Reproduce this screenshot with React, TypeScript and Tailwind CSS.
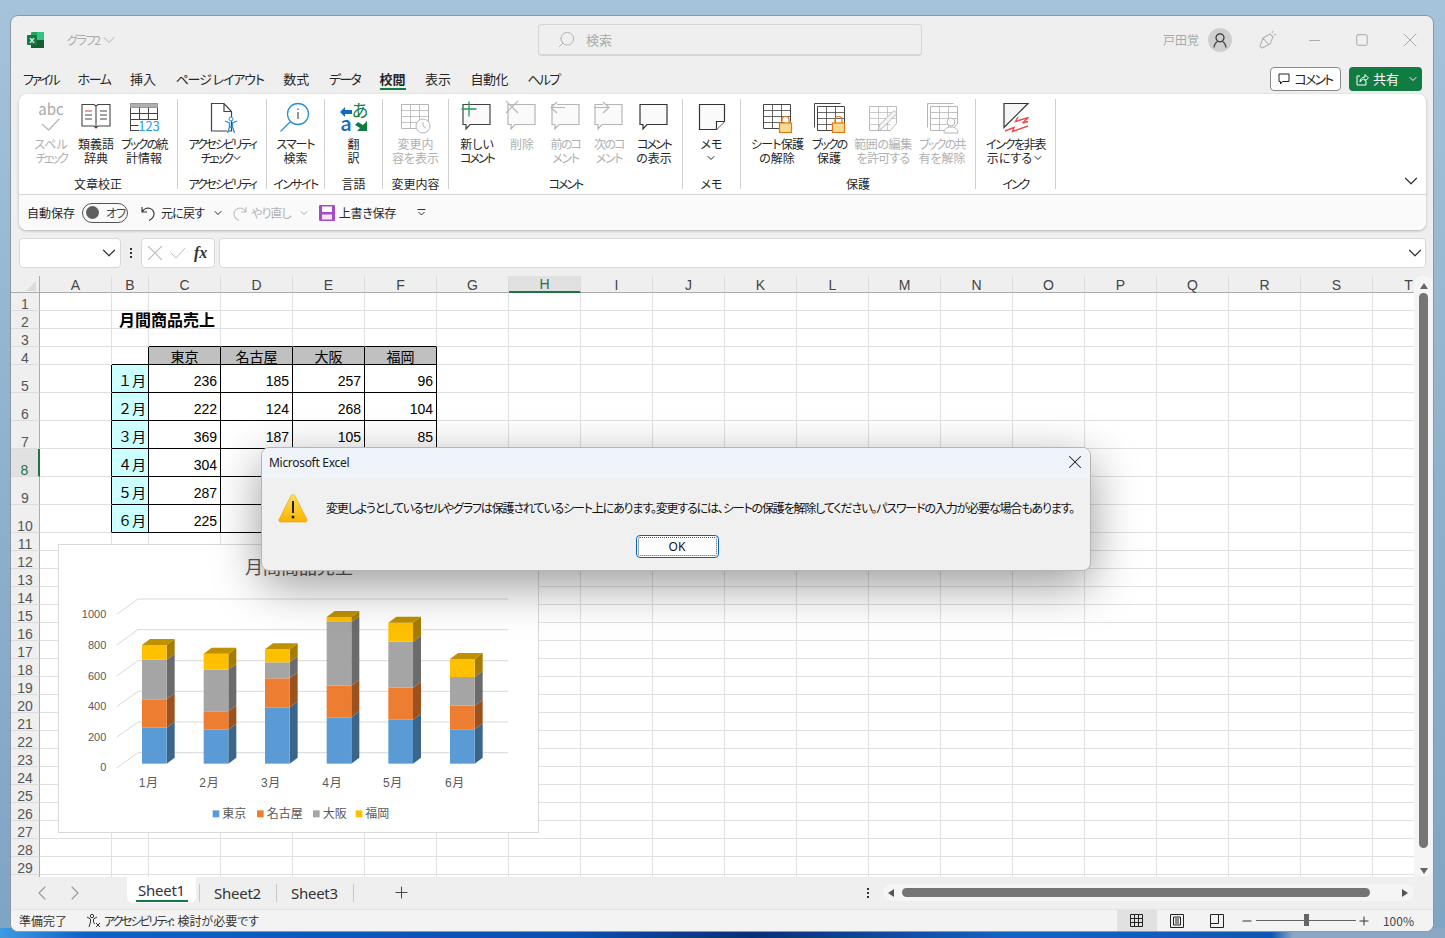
import type { ReactNode } from "react";
import { ChevronDown, ChevronLeft, ChevronRight, Minus, Plus, Search, Square, X } from "lucide-react";

const COLUMNS = "ABCDEFGHIJKLMNOPQRST".split("");
const ROWS = Array.from({ length: 30 }, (_, i) => i + 1);

const CELLS: Record<string, string> = {
  B2: "月間商品売上",
  C4: "東京", D4: "名古屋", E4: "大阪", F4: "福岡",
  B5: "１月", C5: "236", D5: "185", E5: "257", F5: "96",
  B6: "２月", C6: "222", D6: "124", E6: "268", F6: "104",
  B7: "３月", C7: "369", D7: "187", E7: "105", F7: "85",
  B8: "４月", C8: "304",
  B9: "５月", C9: "287",
  B10: "６月", C10: "225",
};

// ui font here is wider than the original on kana, so some labels get tightened
function T({ c, children }: { c: string; children: ReactNode }) {
  return <span className={c}>{children}</span>;
}

function Icon({ children, stroke = "#444" }: { children: ReactNode; stroke?: string }) {
  return (
    <svg width="36" height="34" viewBox="0 0 36 34" fill="none" stroke={stroke} strokeWidth="1" className="overflow-visible">
      {children}
    </svg>
  );
}

// comment bubble used by the comment buttons
function Bubble({ stroke, x = 4, y = 4.5 }: { stroke: string; x?: number; y?: number }) {
  return (
    <path d={`M${x} ${y}h27v20h-20l-4 4.5v-4.5h-3z`} fill="#fafafa" stroke={stroke} strokeWidth="1.2" />
  );
}

// small sheet with a folded corner, used by the protect buttons
function SheetGrid({ stroke, x = 4, y = 4 }: { stroke: string; x?: number; y?: number }) {
  return (
    <g transform={`translate(${x} ${y})`} stroke={stroke}>
      <path d="M.5.5h27v17l-6 7H.5z" fill="#fff" />
      <path d="M.5 6.5h27M.5 12.5h27M.5 18.5h21M9.5.5v24M18.5.5v24" strokeWidth="0.8" />
    </g>
  );
}

function Lock({ x, y }: { x: number; y: number }) {
  return (
    <g transform={`translate(${x} ${y})`}>
      <path d="M3 8V5a3.5 3.5 0 0 1 7 0v3" stroke="#e07a10" strokeWidth="1.2" fill="none" />
      <rect x="0.5" y="8" width="12" height="9.5" fill="#f8d98f" stroke="#e07a10" strokeWidth="1.2" />
    </g>
  );
}

function RibbonButton({
  icon,
  lines,
  disabled,
  className = "",
}: {
  icon: ReactNode;
  lines: ReactNode[];
  disabled?: boolean;
  className?: string;
}) {
  return (
    <div className={`flex flex-col items-center shrink-0 ${className}`}>
      <div className="h-[36px] flex justify-center">{icon}</div>
      <div className={`text-xs leading-[15px] text-center whitespace-nowrap ${disabled ? "text-[#b0b0b0]" : "text-[#262626]"}`}>
        {lines.map((l, i) => (
          <div key={i} className="flex items-center justify-center h-[14.5px]">{l}</div>
        ))}
      </div>
    </div>
  );
}

function RibbonGroup({ label, className = "", children }: { label: ReactNode; className?: string; children: ReactNode }) {
  return (
    <div className={`h-[90px] mt-[5px] flex flex-col border-r border-[#d0d0d0] shrink-0 ${className}`}>
      <div className="flex justify-center pt-px">{children}</div>
      <div className="mt-auto -mb-[2px] text-xs leading-[15px] text-center text-[#262626] whitespace-nowrap">{label}</div>
    </div>
  );
}

const Caret = () => <ChevronDown className="w-[12px] h-[12px]" strokeWidth={2} />;

function Chart() {
  const bars = [
    { x: 274, tops: [562, 477, 358, 314] },
    { x: 459, tops: [568, 513, 388, 340] },
    { x: 643, tops: [501, 414, 366, 327] },
    { x: 828, tops: [531, 436, 245, 230] },
    { x: 1013, tops: [538, 442, 304, 247] },
    { x: 1198, tops: [567, 496, 410, 356] },
  ];
  const front = ["#5b9bd5", "#ed7d31", "#a5a5a5", "#ffc000"];
  const side = ["#3a668c", "#9c521e", "#6b6b6b", "#a67c00"];
  const grid = [176, 268, 361, 453, 545, 637];
  const yLabels: [string, number][] = [["1000", 234], ["800", 325], ["600", 418], ["400", 509], ["200", 602], ["0", 692]];
  const xLabels: [string, number][] = [["1月", 294], ["2月", 476], ["3月", 661], ["4月", 845], ["5月", 1027], ["6月", 1213]];
  const legend: [string, number, string][] = [["東京", 486, front[0]], ["名古屋", 619, front[1]], ["大阪", 787, front[2]], ["福岡", 915, front[3]]];

  return (
    <svg width="481" height="289" viewBox="25 14 1443 867" className="block" fontFamily="'Liberation Sans', 'Noto Sans CJK JP', sans-serif">
      <rect x="25" y="14" width="1443" height="867" fill="#fff" />
      <text x="745" y="102" fontSize="54" fill="#595959" textAnchor="middle">月間商品売上</text>
      {grid.map(y => (
        <g key={y} stroke="#d9d9d9" strokeWidth="3">
          <path d={`M262 ${y}H1372`} />
          <path d={`M262 ${y}L198 ${y + 46}`} />
        </g>
      ))}
      {yLabels.map(([t, y]) => (
        <text key={t} x="167" y={y} fontSize="33" fill="#595959" textAnchor="end">{t}</text>
      ))}
      {bars.map(b => (
        <g key={b.x}>
          {b.tops.map((top, i) => {
            const bottom = i === 0 ? 670 : b.tops[i - 1];
            return (
              <g key={i}>
                <path d={`M${b.x + 74} ${bottom}l24 -18V${top - 18}l-24 18z`} fill={side[i]} />
                <rect x={b.x} y={top} width="74" height={bottom - top} fill={front[i]} />
              </g>
            );
          })}
          <path d={`M${b.x} ${b.tops[3]}h74l24 -18h-74z`} fill="#bf9000" />
        </g>
      ))}
      {xLabels.map(([t, x]) => (
        <text key={t} x={x} y="741" fontSize="36" fill="#595959" textAnchor="middle" letterSpacing="2">{t}</text>
      ))}
      {legend.map(([t, x, color]) => (
        <g key={t}>
          <rect x={x} y="810" width="20" height="21" fill={color} />
          <text x={x + 29} y="832" fontSize="36" fill="#595959">{t}</text>
        </g>
      ))}
    </svg>
  );
}

function Cell({ r, c }: { r: number; c: string }) {
  const text = CELLS[`${c}${r}`];
  const inBody = "CDEF".includes(c);
  const blackRight = (inBody && r >= 4 && r <= 10) || (c === "B" && r >= 4 && r <= 10) || (c === "A" && r >= 5 && r <= 10);
  const blackBottom = (inBody && r >= 3 && r <= 10) || (c === "B" && r >= 4 && r <= 10);
  const header = inBody && r === 4;
  const month = c === "B" && r >= 5 && r <= 10;
  const tall = r >= 5 && r <= 10;
  const title = r === 2 && c === "B";
  return (
    <div
      className={`flex whitespace-nowrap leading-[18px] text-black border-r border-b ${title ? "font-bold text-base pl-[7px] pt-[3px]" : "text-sm"} ${tall ? "h-7 items-end pb-[2px]" : "h-[18px] items-center"} ${blackRight ? "border-r-black" : "border-r-[#e0e0e0]"} ${blackBottom ? "border-b-black" : "border-b-[#e0e0e0]"} ${header ? "bg-[#c0c0c0] justify-center pt-[2px]" : ""} ${month ? "bg-[#ccffff] justify-end pr-[2px]" : ""} ${inBody && tall ? "justify-end pr-[3px]" : ""}`}
    >
      {text}
    </div>
  );
}

function Row({ r }: { r: number }) {
  const tall = r >= 5 && r <= 10;
  return (
    <>
      <div
        className={`flex items-end justify-center text-sm leading-[18px] border-b border-b-[#dcdcdc] ${tall ? "h-7" : "h-[18px]"} ${r === 8 ? "bg-[#e1e1e1] text-[#217346] border-r-2 border-r-[#217346]" : "bg-[#efefef] text-[#555] border-r border-r-[#ababab]"}`}
      >
        {r < 30 && <span className="-mb-[3px]">{r}</span>}
      </div>
      {COLUMNS.map(c => (
        <Cell key={c} r={r} c={c} />
      ))}
    </>
  );
}

function Sheet() {
  return (
    <div className="relative shrink-0 w-[1403px] h-[601px] overflow-hidden bg-white [font-feature-settings:normal] [font-family:'Liberation_Sans','Noto_Sans_CJK_JP',sans-serif]">
      <div className="grid grid-cols-[29px_72px_37px_repeat(18,72px)] w-[1434px]">
        <div className="h-[17px] bg-[#efefef] border-b border-b-[#ababab] border-r border-r-[#ababab] relative">
          <div className="absolute right-[3px] bottom-[1px] w-0 h-0 border-l-[10px] border-l-transparent border-b-[10px] border-b-[#dcdcdc]" />
        </div>
        {COLUMNS.map(c => (
          <div
            key={c}
            className={`h-[17px] flex items-center justify-center text-sm leading-[16px] pt-px border-r border-r-[#dcdcdc] ${c === "H" ? "bg-[#e1e1e1] text-[#217346] border-b-2 border-b-[#217346]" : "bg-[#efefef] text-[#444] border-b border-b-[#ababab]"}`}
          >
            {c}
          </div>
        ))}
        {ROWS.map(r => (
          <Row key={r} r={r} />
        ))}
      </div>
      <div className="absolute left-[47px] top-[268px]">
        <div className="border border-[#d9d9d9] bg-white w-[481px] h-[289px] overflow-hidden">
          <Chart />
        </div>
      </div>
    </div>
  );
}

function Dialog() {
  return (
    <div className="absolute left-[250px] top-[431px] w-[830px] h-[124px] rounded-lg overflow-hidden bg-[#f0f0f0] border border-[#b5b5b5] shadow-[0_14px_48px_rgba(0,0,0,0.4)] flex flex-col">
      <div className="h-[30px] shrink-0 bg-[#eff3fa] flex items-center justify-between pl-[7px] pr-[4px]">
        <span className="[font-family:'Noto_Sans',sans-serif] text-xs tracking-[-0.3px] text-[#1a1a1a]">Microsoft Excel</span>
        <X className="w-[22px] h-[22px] text-[#222] -mt-[3px]" strokeWidth={1.1} />
      </div>
      <div className="flex items-center pl-[16px] pt-[2px] h-[57px] shrink-0">
        <svg width="30" height="30" viewBox="0 0 30 30" className="shrink-0">
          <defs>
            <linearGradient id="warn" x1="0" y1="0" x2="0" y2="1">
              <stop offset="0" stopColor="#ffe25c" />
              <stop offset="1" stopColor="#f9b200" />
            </linearGradient>
          </defs>
          <path d="M15 1.5c1 0 1.6.6 2.2 1.7l11.6 23c.7 1.5 0 2.8-1.6 2.8H2.8c-1.6 0-2.3-1.3-1.6-2.8l11.6-23c.6-1.1 1.2-1.7 2.2-1.7z" fill="url(#warn)" stroke="#e0a000" strokeWidth="0.6" />
          <path d="M15 8v12" stroke="#222" strokeWidth="2" />
          <circle cx="15" cy="24" r="1.5" fill="#222" />
        </svg>
        <span className="ml-[18px] text-xs text-[#111] whitespace-nowrap tracking-[-1.15px]">
          変更しようとしているセルやグラフは保護されているシート上にあります。変更するには、シートの保護を解除してください。パスワードの入力が必要な場合もあります。
        </span>
      </div>
      <div className="flex justify-center pl-[2px]">
        <div className="w-[83px] h-[23px] bg-[#fdfdfd] border border-[#0067c0] rounded-[4px] outline-1 outline-dotted outline-[#555] -outline-offset-[3px] flex items-center justify-center text-xs text-[#111] [font-family:'Noto_Sans',sans-serif]">
          OK
        </div>
      </div>
    </div>
  );
}

export default function App() {
  const tabs: [string, string][] = [
    ["ファイル", "tracking-[-2.5px]"],
    ["ホーム", "tracking-[-1.4px]"],
    ["挿入", ""],
    ["ページ レイアウト", "tracking-[-1.1px]"],
    ["数式", ""],
    ["データ", "tracking-[-1.7px]"],
    ["校閲", "font-bold after:absolute after:left-0 after:right-0 after:-bottom-[1px] after:h-[2px] after:bg-[#107c41]"],
    ["表示", ""],
    ["自動化", "tracking-[-0.6px]"],
    ["ヘルプ", "tracking-[-1.7px]"],
  ];
  return (
    <div className="w-[1445px] h-[938px] overflow-hidden pt-[15px] pl-[10px] [font-family:'Noto_Sans_CJK_JP',sans-serif] [font-feature-settings:'palt'] [background:linear-gradient(90deg,#3e9be0_0%,#0f62c8_6%,#0a4fb0_40%,#0a2f78_52%,#1464c4_70%,#0f57b4_88%,#8aa8c4_89.5%,#8aa8c4_100%)_bottom/100%_10px_no-repeat,linear-gradient(180deg,#a5c3da_0%,#8eb1cd_50%,#7fa5c4_100%)]">
      <div className="relative w-[1424px] h-[917px] rounded-lg bg-[#efefef] border border-[#8b98a3] overflow-hidden flex flex-col">
        {/* title bar */}
        <div className="h-[48px] shrink-0 flex items-center text-xs text-[#ababab]">
          <div className="w-[527px] shrink-0 flex items-center pl-[16px]">
            <svg width="17" height="16" viewBox="0 0 17 16" className="shrink-0">
              <rect x="4" y="0" width="13" height="16" rx="1" fill="#21a366" />
              <rect x="10" y="0" width="7" height="8" fill="#33c481" />
              <rect x="4" y="8" width="13" height="8" fill="#185c37" />
              <rect x="0" y="3" width="10" height="10" rx="1" fill="#107c41" />
              <text x="5" y="11" fontSize="8" fontWeight="700" fill="#fff" textAnchor="middle" fontFamily="'Liberation Sans', sans-serif">X</text>
            </svg>
            <span className="ml-[23px] tracking-[-1.3px]">グラフ2</span>
            <ChevronDown className="w-[20px] h-[20px] -ml-[1px]" strokeWidth={1.1} />
          </div>
          <div className="w-[384px] h-[32px] rounded-[4px] bg-[#efefef] border border-[#d5d5d5] border-b-2 flex items-center pl-[18px]">
            <Search className="w-[19px] h-[19px] -scale-x-100" strokeWidth={1.1} />
            <span className="ml-[10px] text-[13px]">検索</span>
          </div>
          <div className="ml-auto flex items-center pr-[11px]">
            <span className="text-[#a9a9a9]">戸田覚</span>
            <div className="ml-[9px] w-[24px] h-[24px] rounded-full bg-[#cfcfcf] flex items-center justify-center">
              <svg width="14" height="15" viewBox="0 0 14 15" fill="none" stroke="#333" strokeWidth="1.2">
                <circle cx="7" cy="4.8" r="4" />
                <path d="M1 14.5c.5-3.5 2.6-5.5 3.6-6M13 14.5c-.5-3.5-2.6-5.5-3.6-6" />
              </svg>
            </div>
            <svg width="18" height="18" viewBox="0 0 18 18" fill="none" stroke="#b5b5b5" strokeWidth="1.1" className="ml-[27px]">
              <path d="M1 15l3-8 7-4 3 3-3 7-8 4zM4 7l6 7M13 2l1-2M15 4l2-1" />
            </svg>
            <Minus className="w-[17px] h-[17px] ml-[29px]" strokeWidth={1.4} />
            <Square className="w-[14px] h-[14px] ml-[32px]" strokeWidth={1.7} />
            <X className="w-[24px] h-[24px] ml-[29px]" strokeWidth={1} />
          </div>
        </div>

        {/* tabs */}
        <div className="h-[30px] shrink-0 flex items-center pl-[12px] pr-[11px] text-[13px] text-[#262626]">
          <div className="flex gap-[19.5px]">
            {tabs.map(([t, cls]) => (
              <div key={t} className={`relative whitespace-nowrap leading-[20px] ${cls}`}>
                {t}
              </div>
            ))}
          </div>
          <div className="ml-auto w-[71px] h-[24px] rounded-[4px] bg-white border border-[#8a8a8a] flex items-center justify-center gap-[4px]">
            <svg width="12" height="12" viewBox="0 0 12 12" fill="none" stroke="#222">
              <path d="M1 1h10v7.5H4.5L2.5 11V8.5H1z" />
            </svg>
            <span className="text-[13px] tracking-[-1.8px]">コメント</span>
          </div>
          <div className="ml-[8px] w-[73px] h-[24px] rounded-[4px] bg-[#107c41] text-white flex items-center pl-[7px]">
            <svg width="13" height="13" viewBox="0 0 13 13" fill="none" stroke="#fff" strokeWidth="1">
              <path d="M4 3H1v9h9V8M4 9c0-3 2-5 5-5V1.5l3.5 3.5L9 8V6C7 6 5 7 4 9z" />
            </svg>
            <span className="ml-[4px] text-[13px]">共有</span>
            <ChevronDown className="w-[12px] h-[12px] ml-[8px]" strokeWidth={2} />
          </div>
        </div>

        {/* ribbon */}
        <div className="mx-[8px] w-[1407px] h-[136px] shrink-0 rounded-lg bg-white shadow-[0_1px_3px_rgba(0,0,0,0.25)] flex flex-col">
          <div className="h-[101px] flex border-b border-[#d6d6d6] relative">
            <RibbonGroup label="文章校正" className="w-[159px]">
              <div className="flex pl-[14px] w-full">
                <RibbonButton
                  disabled
                  className="w-[36px]"
                  lines={["スペル", <T c="tracking-[-2.6px]">チェック</T>]}
                  icon={
                    <Icon stroke="#b8b8b8">
                      <text x="18" y="15" fontSize="15" textAnchor="middle" fill="#a8a8a8" stroke="none">abc</text>
                      <path d="M9 24l6.7 6L26.3 18.7" strokeWidth="1.3" />
                    </Icon>
                  }
                />
                <RibbonButton
                  className="w-[54px]"
                  lines={["類義語", "辞典"]}
                  icon={
                    <Icon>
                      <path d="M4 4.5h12l2 1.5 2-1.5h12V26H20l-2 2-2-2H4zM18 6v22" fill="#fff" strokeWidth="1.1" />
                      <path d="M7 11h7" stroke="#d83b3b" />
                      <path d="M7 15h7M7 19h7M22 11h7M22 15h7M22 19h7" />
                    </Icon>
                  }
                />
                <RibbonButton
                  className="w-[42px]"
                  lines={[<T c="tracking-[-1.8px]">ブックの統</T>, "計情報"]}
                  icon={
                    <Icon>
                      <rect x="4.5" y="3.5" width="27" height="27" fill="#fff" />
                      <rect x="4.5" y="3.5" width="27" height="4" fill="#b0b0b0" stroke="#999" />
                      <path d="M4.5 13.5h27M4.5 19.5h27M4.5 25.5h8M13.5 7.5v23M22.5 7.5v12" />
                      <rect x="13" y="20" width="19" height="12" fill="#fff" stroke="none" />
                      <text x="23" y="31" fontSize="13" textAnchor="middle" fill="#2b9be0" stroke="none">123</text>
                    </Icon>
                  }
                />
              </div>
            </RibbonGroup>
            <RibbonGroup label={<T c="tracking-[-2.1px]">アクセシビリティ</T>} className="w-[89px]">
              <RibbonButton
                lines={[
                  <T c="tracking-[-2.1px]">アクセシビリティ</T>,
                  <>
                    <T c="tracking-[-2.6px]">チェック</T>
                    <Caret />
                  </>,
                ]}
                icon={
                  <Icon>
                    <path d="M7.5 3.5H20l7.5 8V31H7.5zM20 3.5v8h7.5" fill="#fff" strokeWidth="1.2" />
                    <circle cx="27" cy="19" r="2" stroke="#2b8fd8" fill="#fff" />
                    <path d="M21 21l4.5 2v4l-2 6M33 21l-4.5 2v4l2 6M25.5 27h3" stroke="#2b8fd8" strokeWidth="1.3" fill="#fff" />
                  </Icon>
                }
              />
            </RibbonGroup>
            <RibbonGroup label={<T c="tracking-[-1.6px]">インサイト</T>} className="w-[58px]">
              <RibbonButton
                lines={[<T c="tracking-[-1px]">スマート</T>, "検索"]}
                icon={
                  <Icon stroke="#2b8fd8">
                    <circle cx="21" cy="14" r="10.5" strokeWidth="1.3" />
                    <path d="M13.5 21.5L3.5 31.5" strokeWidth="1.3" />
                    <path d="M21 12v7M21 8.5V10" stroke="#333" />
                  </Icon>
                }
              />
            </RibbonGroup>
            <RibbonGroup label="言語" className="w-[58px]">
              <RibbonButton
                lines={["翻", "訳"]}
                icon={
                  <Icon stroke="none">
                    <text x="24" y="17" fontSize="17" textAnchor="middle" fill="#107c41">あ</text>
                    <text x="10" y="31" fontSize="20" textAnchor="middle" fontWeight="500" fill="#0f6cbd">a</text>
                    <path d="M4 12l5-5v3h7v4H9v3z" fill="#0f6cbd" />
                    <path d="M31 21v10H21l3-3-5-3 3-3 5 3z" fill="#107c41" />
                  </Icon>
                }
              />
            </RibbonGroup>
            <RibbonGroup label="変更内容" className="w-[66px]">
              <RibbonButton
                disabled
                lines={["変更内", "容を表示"]}
                icon={
                  <Icon>
                    <SheetGrid stroke="#b5b5b5" />
                    <circle cx="26" cy="26" r="7" fill="#fff" stroke="#b5b5b5" />
                    <path d="M26 22v4l3 2" stroke="#b5b5b5" />
                  </Icon>
                }
              />
            </RibbonGroup>
            <RibbonGroup label={<T c="tracking-[-2px]">コメント</T>} className="w-[234px]">
              <div className="flex pl-[6px] w-full">
                <RibbonButton
                  className="w-[44px]"
                  lines={["新しい", <T c="tracking-[-2px]">コメント</T>]}
                  icon={
                    <Icon>
                      <Bubble stroke="#444" />
                      <path d="M10 1.5v15M2.5 9h15" stroke="#1e9e55" strokeWidth="1.3" />
                    </Icon>
                  }
                />
                <RibbonButton
                  disabled
                  className="w-[46px]"
                  lines={["削除"]}
                  icon={
                    <Icon>
                      <Bubble stroke="#b5b5b5" />
                      <path d="M2 1l12 12M14 1L2 13" stroke="#b5b5b5" strokeWidth="1.1" />
                    </Icon>
                  }
                />
                <RibbonButton
                  disabled
                  className="w-[41px]"
                  lines={[<T c="tracking-[-1.7px]">前のコ</T>, <T c="tracking-[-1.3px]">メント</T>]}
                  icon={
                    <Icon>
                      <Bubble stroke="#b5b5b5" />
                      <path d="M17 7.5H3M9 2L3 7.5 9 13" stroke="#b5b5b5" strokeWidth="1.1" fill="#fafafa" />
                    </Icon>
                  }
                />
                <RibbonButton
                  disabled
                  className="w-[46px]"
                  lines={[<T c="tracking-[-1.7px]">次のコ</T>, <T c="tracking-[-1.3px]">メント</T>]}
                  icon={
                    <Icon>
                      <Bubble stroke="#b5b5b5" />
                      <path d="M3 7.5h15M12 2l6 5.5L12 13" stroke="#b5b5b5" strokeWidth="1.1" fill="#fafafa" />
                    </Icon>
                  }
                />
                <RibbonButton
                  className="w-[44px]"
                  lines={[<T c="tracking-[-2px]">コメント</T>, "の表示"]}
                  icon={
                    <Icon>
                      <Bubble stroke="#333" />
                    </Icon>
                  }
                />
              </div>
            </RibbonGroup>
            <RibbonGroup label="メモ" className="w-[58px]">
              <RibbonButton
                lines={["メモ", <Caret />]}
                icon={
                  <Icon stroke="#333">
                    <path d="M5.5 4.5h25v17l-8 8h-17z" fill="#fafafa" strokeWidth="1.2" />
                    <path d="M30.5 21.5h-8v8" strokeWidth="1.2" fill="#fff" />
                  </Icon>
                }
              />
            </RibbonGroup>
            <RibbonGroup label="保護" className="w-[235px]">
              <div className="flex pl-[8px] w-full">
                <RibbonButton
                  className="w-[56px]"
                  lines={[<T c="tracking-[-0.8px]">シート保護</T>, "の解除"]}
                  icon={
                    <Icon>
                      <SheetGrid stroke="#444" x={4} y={4} />
                      <Lock x={20} y={15} />
                    </Icon>
                  }
                />
                <RibbonButton
                  className="w-[48px]"
                  lines={[<T c="tracking-[-2px]">ブックの</T>, "保護"]}
                  icon={
                    <Icon>
                      <path d="M3.5 3.5h26M3.5 3.5v24" stroke="#444" />
                      <SheetGrid stroke="#444" x={6} y={6} />
                      <Lock x={21} y={15} />
                    </Icon>
                  }
                />
                <RibbonButton
                  disabled
                  className="w-[60px]"
                  lines={[<T c="tracking-[-0.4px]">範囲の編集</T>, <T c="tracking-[-0.8px]">を許可する</T>]}
                  icon={
                    <Icon>
                      <SheetGrid stroke="#bcbcbc" x={4} y={6} />
                      <path d="M13 31l1.5-6L28 11.5c1.5-1.5 4.5 1.5 3 3L17.5 28z" fill="#f4f4f4" stroke="#b5b5b5" />
                    </Icon>
                  }
                />
                <RibbonButton
                  disabled
                  className="w-[58px]"
                  lines={[<T c="tracking-[-1.8px]">ブックの共</T>, "有を解除"]}
                  icon={
                    <Icon>
                      <path d="M3.5 3.5h26M3.5 3.5v24" stroke="#b5b5b5" />
                      <SheetGrid stroke="#b5b5b5" x={6} y={6} />
                      <circle cx="27" cy="22" r="4" fill="#fff" stroke="#b5b5b5" />
                      <path d="M20 33c0-4 3-6 7-6s7 2 7 6z" fill="#fff" stroke="#b5b5b5" />
                    </Icon>
                  }
                />
              </div>
            </RibbonGroup>
            <RibbonGroup label={<T c="tracking-[-2px]">インク</T>} className="w-[80px]">
              <RibbonButton
                lines={[
                  <T c="tracking-[-1.3px]">インクを非表</T>,
                  <>
                    示にする
                    <Caret />
                  </>,
                ]}
                icon={
                  <Icon stroke="#333">
                    <path d="M6 3.5h24L6 27.5z" fill="#f6f6f6" strokeWidth="1.2" />
                    <path d="M20 17l-2.5 4.5 13-4-6 5.5 5.5-1.5M7 31l9-3.5-1.5 4L30 26" stroke="#ef4b4b" strokeWidth="1.4" />
                  </Icon>
                }
              />
            </RibbonGroup>
            <div className="flex-1 flex items-end justify-end pr-[4px] pb-[2px]">
              <ChevronDown className="w-[22px] h-[22px] text-[#333]" strokeWidth={1.3} />
            </div>
          </div>

          {/* quick access */}
          <div className="flex-1 rounded-b-lg bg-[#fafafa] flex items-center pl-[8px] text-xs text-[#262626]">
            <span>自動保存</span>
            <div className="ml-[7px] w-[46px] h-[20px] rounded-full border border-[#555] flex items-center pl-[3px]">
              <span className="w-[13px] h-[13px] rounded-full bg-[#5f5f5f]" />
              <span className="ml-[7px] text-[#444] whitespace-nowrap tracking-[-1px]">オフ</span>
            </div>
            <svg width="16" height="16" viewBox="0 0 16 16" fill="none" stroke="#333" strokeWidth="1.1" className="ml-[13px]">
              <path d="M1 2v5h5M1.5 6.5C3 4 5 3 7.5 3A6 6 0 0 1 13 9c0 3-2 5-5 6.5" />
            </svg>
            <span className="ml-[4px] tracking-[-0.8px]">元に戻す</span>
            <ChevronDown className="w-[12px] h-[12px] ml-[8px]" strokeWidth={2} />
            <svg width="16" height="16" viewBox="0 0 16 16" fill="none" stroke="#bdbdbd" strokeWidth="1.1" className="ml-[7px]">
              <path d="M15 2v5h-5M14.5 6.5C13 4 11 3 8.5 3A6 6 0 0 0 3 9c0 3 2 5 5 6.5" />
            </svg>
            <span className="ml-[4px] text-[#b0b0b0] tracking-[-1px]">やり直し</span>
            <ChevronDown className="w-[12px] h-[12px] ml-[7px] text-[#b0b0b0]" strokeWidth={2} />
            <svg width="16" height="16" viewBox="0 0 16 16" className="ml-[9px]">
              <rect x="0" y="0" width="16" height="16" rx="1" fill="#a64ac9" />
              <rect x="3" y="1.5" width="10" height="5.5" fill="#fff" />
              <rect x="3" y="9.5" width="10" height="5" fill="#f5e4f8" />
            </svg>
            <span className="ml-[4px] tracking-[-0.2px]">上書き保存</span>
            <svg width="9" height="7" viewBox="0 0 9 7" fill="none" stroke="#333" className="ml-[21px]">
              <path d="M.5.5h8M1.5 3l3 3 3-3" />
            </svg>
          </div>
        </div>

        {/* formula bar */}
        <div className="mt-[8px] mx-[8px] w-[1407px] h-[30px] shrink-0 flex">
          <div className="w-[102px] bg-white border border-[#d8d8d8] rounded-[4px] flex items-center justify-end">
            <ChevronDown className="w-[22px] h-[22px] text-[#333]" strokeWidth={1.3} />
          </div>
          <div className="w-[20px] flex flex-col items-center justify-center gap-[2px]">
            <span className="w-[2px] h-[2px] bg-[#333]" />
            <span className="w-[2px] h-[2px] bg-[#333]" />
            <span className="w-[2px] h-[2px] bg-[#333]" />
          </div>
          <div className="w-[74px] bg-white border border-[#d8d8d8] rounded-[4px] flex items-center">
            <X className="w-[26px] h-[26px] text-[#bdbdbd]" strokeWidth={1} />
            <svg width="16" height="14" viewBox="0 0 16 14" fill="none" stroke="#bdbdbd" className="ml-[2px]">
              <path d="M1 7l5 5L15 2" />
            </svg>
            <span className="ml-[8px] [font-family:'Liberation_Serif',serif] italic font-bold text-base leading-none text-[#333]">fx</span>
          </div>
          <div className="ml-[4px] flex-1 bg-white border border-[#d8d8d8] rounded-[4px] flex items-center justify-end">
            <ChevronDown className="w-[22px] h-[22px] text-[#333] -mr-[1px]" strokeWidth={1.3} />
          </div>
        </div>

        {/* sheet + vertical scrollbar */}
        <div className="mt-[8px] flex shrink-0">
          <Sheet />
          <div className="w-[19px] h-[601px] bg-[#f5f5f5] rounded-lg flex flex-col items-center">
            <div className="mt-[7px] w-0 h-0 border-x-[4px] border-x-transparent border-b-[6px] border-b-[#666]" />
            <div className="mt-[4px] w-[9px] h-[555px] rounded-full bg-[#757575]" />
            <div className="mt-auto mb-[3px] w-0 h-0 border-x-[4px] border-x-transparent border-t-[6px] border-t-[#666]" />
          </div>
        </div>

        {/* sheet tabs */}
        <div className="h-[32px] shrink-0 flex items-start text-[15px] text-[#333] [font-family:'Noto_Sans',sans-serif]">
          <ChevronLeft className="w-[24px] h-[24px] mt-[4px] ml-[19px] text-[#999]" strokeWidth={1.1} />
          <ChevronRight className="w-[24px] h-[24px] mt-[4px] ml-[9px] text-[#999]" strokeWidth={1.1} />
          <div className="ml-[40px] w-[69px] h-[26px] bg-white rounded-b-md flex flex-col items-center">
            <span className="leading-[26px] h-[23px] tracking-[-0.25px]">Sheet1</span>
            <span className="w-[52px] h-[2px] bg-[#107c41]" />
          </div>
          <div className="mt-[7px] ml-[3px] h-[18px] border-l border-[#c8c8c8]" />
          <span className="ml-[14px] leading-[33px] tracking-[-0.25px]">Sheet2</span>
          <div className="mt-[7px] ml-[15px] h-[18px] border-l border-[#c8c8c8]" />
          <span className="ml-[14px] leading-[33px] tracking-[-0.25px]">Sheet3</span>
          <div className="mt-[7px] ml-[15px] h-[18px] border-l border-[#c8c8c8]" />
          <Plus className="w-[19px] h-[19px] mt-[6px] ml-[38px] text-[#444]" strokeWidth={1.3} />
          <div className="ml-[456px] mt-[11px] flex flex-col gap-[2px]">
            <span className="w-[2px] h-[2px] bg-[#333]" />
            <span className="w-[2px] h-[2px] bg-[#333]" />
            <span className="w-[2px] h-[2px] bg-[#333]" />
          </div>
          <div className="ml-[14px] mt-[7px] w-[531px] h-[17px] bg-[#f5f5f5] rounded-full flex items-center pl-[5px]">
            <div className="w-0 h-0 border-y-[4px] border-y-transparent border-r-[6px] border-r-[#555]" />
            <div className="ml-[8px] w-[468px] h-[9px] rounded-full bg-[#757575]" />
            <div className="ml-auto mr-[6px] w-0 h-0 border-y-[4px] border-y-transparent border-l-[6px] border-l-[#555]" />
          </div>
        </div>

        {/* status bar */}
        <div className="flex-1 bg-[#f3f3f3] border-t border-[#e4e4e4] flex items-center pl-[8px] text-xs text-[#333]">
          <span>準備完了</span>
          <svg width="15" height="15" viewBox="0 0 15 15" fill="none" stroke="#333" className="ml-[19px]">
            <circle cx="6" cy="3" r="1.7" />
            <path d="M1 4l3.5 2v3L3 14M11 4L7.5 6v3l1 2M10 10l4 4M14 10l-4 4" />
          </svg>
          <span className="ml-[3px] whitespace-nowrap">
            <T c="tracking-[-2.1px]">アクセシビリティ</T>: 検討が必要です
          </span>
          <div className="ml-auto flex items-center h-full">
            <div className="w-[40px] h-full bg-[#e1e1e1] flex items-center justify-center">
              <svg width="13" height="13" viewBox="0 0 13 13" fill="none" stroke="#222">
                <path d="M.5.5h12v12H.5zM.5 4.5h12M.5 8.5h12M4.5.5v12M8.5.5v12" />
              </svg>
            </div>
            <div className="w-[40px] flex justify-center">
              <svg width="14" height="14" viewBox="0 0 14 14" fill="none" stroke="#222">
                <path d="M.5.5h13v13H.5zM3.5 3h7v8h-7zM5 5h4M5 7h4M5 9h4" />
              </svg>
            </div>
            <div className="w-[40px] flex justify-center">
              <svg width="14" height="14" viewBox="0 0 14 14" fill="none" stroke="#222">
                <path d="M.5.5h13v13H.5zM.5 9.5h8V.5" />
              </svg>
            </div>
            <Minus className="w-[14px] h-[14px] ml-[3px]" strokeWidth={1.7} />
            <div className="relative w-[100px] h-px bg-[#666] ml-[2px]">
              <div className="absolute left-[48px] -top-[6px] w-[5px] h-[12px] bg-[#666]" />
            </div>
            <Plus className="w-[14px] h-[14px] ml-[1px]" strokeWidth={1.7} />
            <span className="ml-[12px] mr-[19px] text-[#444]">100%</span>
          </div>
        </div>

        <Dialog />
      </div>
    </div>
  );
}
